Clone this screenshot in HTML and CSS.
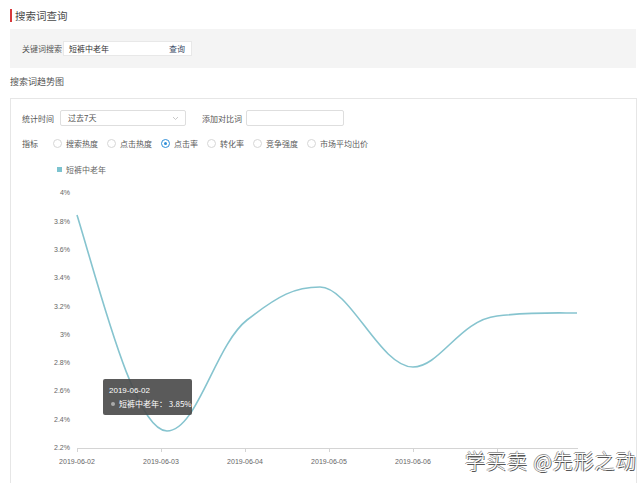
FILE: index.html
```html
<!DOCTYPE html>
<html lang="zh-CN">
<head>
<meta charset="utf-8">
<title>搜索词查询</title>
<link rel="stylesheet" href="styles.css">
</head>
<body>
<div class="header"><span class="title">搜索词查询</span></div>
<div class="search">
  <span class="search-label">关键词搜索</span>
  <div class="search-box"><span class="kw">短裤中老年</span><span class="query">查询</span></div>
</div>
<div class="section-title">搜索词趋势图</div>
<div class="chart-panel">
  <div class="controls">
    <div class="row">
      <span class="lbl">统计时间</span>
      <div class="select">过去7天<svg class="chev" width="7" height="5" viewBox="0 0 7 5"><path d="M1 1 L3.5 3.5 L6 1" fill="none" stroke="#bbb" stroke-width="0.8"/></svg></div>
      <span class="lbl2">添加对比词</span>
      <div class="cmp-input"></div>
    </div>
    <div class="row row2">
      <span class="lbl-short">指标</span>
      <label class="radio"><i class="dot"></i>搜索热度</label>
      <label class="radio"><i class="dot"></i>点击热度</label>
      <label class="radio"><i class="dot on"></i>点击率</label>
      <label class="radio"><i class="dot"></i>转化率</label>
      <label class="radio"><i class="dot"></i>竞争强度</label>
      <label class="radio"><i class="dot"></i>市场平均出价</label>
    </div>
    <div class="legend"><i class="sq"></i>短裤中老年</div>
  </div>
  <svg class="chart" width="624" height="308" viewBox="11 175 624 308">
    <g class="ylab">
      <text x="70" y="193">4%</text>
      <text x="70" y="222">3.8%</text>
      <text x="70" y="250">3.6%</text>
      <text x="70" y="278">3.4%</text>
      <text x="70" y="307">3.2%</text>
      <text x="70" y="335">3%</text>
      <text x="70" y="363">2.8%</text>
      <text x="70" y="391">2.6%</text>
      <text x="70" y="420">2.4%</text>
      <text x="70" y="448">2.2%</text>
    </g>
    <line x1="77" y1="448.5" x2="578" y2="448.5" stroke="#d4d4d4" stroke-width="1"/>
    <g stroke="#d4d4d4" stroke-width="1">
      <line x1="77.5" y1="448" x2="77.5" y2="452"/>
      <line x1="161.5" y1="448" x2="161.5" y2="452"/>
      <line x1="245.5" y1="448" x2="245.5" y2="452"/>
      <line x1="329.5" y1="448" x2="329.5" y2="452"/>
      <line x1="413.5" y1="448" x2="413.5" y2="452"/>
      <line x1="497.5" y1="448" x2="497.5" y2="452"/>
    </g>
    <g class="xlab">
      <text x="77" y="464">2019-06-02</text>
      <text x="161" y="464">2019-06-03</text>
      <text x="245" y="464">2019-06-04</text>
      <text x="329" y="464">2019-06-05</text>
      <text x="413" y="464">2019-06-06</text>
    </g>
    <path d="M77,215 C100,290 135,431 167,431 C197,431 215,345 247,320 C279,295 295,287 320,287 C350,287 380,367 413,367 C440,367 460,320 497,316 C530,312 555,313 577,313" fill="none" stroke="#86c4cf" stroke-width="1.6"/>
  </svg>
  <div class="tooltip">
    <div class="tt-date">2019-06-02</div>
    <div class="tt-row"><i class="tt-dot"></i>短裤中老年： 3.85%</div>
  </div>
</div>
<div class="watermark">学买卖 @先形之动</div>
</body>
</html>
```

FILE: styles.css
```css
* { box-sizing: border-box; }
body {
  margin: 0;
  background: #fff;
  font-family: "Noto Sans CJK SC", "Noto Sans", sans-serif;
  font-size: 8px;
  color: #555;
  overflow: hidden;
  height: 483px;
}
.header {
  height: 29px;
  padding: 9px 0 0 10px;
}
.title {
  display: block;
  border-left: 2px solid #d8393b;
  padding-left: 3px;
  line-height: 13px;
  font-size: 10.5px;
  color: #4a4a4a;
}
.search {
  margin-left: 10px;
  width: 626px;
  height: 39px;
  background: #f4f4f4;
  display: flex;
  align-items: center;
  padding-left: 12px;
}
.search-label { width: 41px; color: #555; }
.search-box {
  width: 129px;
  height: 15px;
  background: #fff;
  border: 1px solid #e8e8e8;
  display: flex;
  align-items: center;
  justify-content: space-between;
  padding: 0 6px 0 5px;
  color: #333;
}
.query { color: #3a4a66; }
.section-title {
  height: 30px;
  padding: 8px 0 0 10px;
  font-size: 9px;
  line-height: 12px;
  color: #555;
}
.chart-panel {
  position: relative;
  margin-left: 10px;
  width: 627px;
  height: 385px;
  border: 1px solid #e6e6e6;
  border-bottom: none;
}
.controls { padding: 11px 0 0 11px; }
.row {
  display: flex;
  align-items: center;
  height: 16px;
}
.lbl { width: 38px; }
.select {
  position: relative;
  width: 126px;
  height: 16px;
  border: 1px solid #dedede;
  border-radius: 2px;
  padding-left: 7px;
  line-height: 14px;
  color: #555;
}
.chev { position: absolute; right: 6px; top: 5px; }
.lbl2 { margin-left: 16px; width: 44px; }
.cmp-input {
  width: 98px;
  height: 16px;
  border: 1px solid #dedede;
  border-radius: 2px;
}
.row2 { margin-top: 9px; }
.lbl-short { width: 31px; }
.radio {
  display: flex;
  align-items: center;
  margin-right: 9px;
  color: #5a5a5a;
}
.dot {
  width: 9px;
  height: 9px;
  border: 1px solid #d6d6d6;
  border-radius: 50%;
  margin-right: 4px;
  position: relative;
}
.dot.on { border-color: #2f8ed8; }
.dot.on::after {
  content: "";
  position: absolute;
  left: 2px;
  top: 2px;
  width: 3px;
  height: 3px;
  border-radius: 50%;
  background: #2f8ed8;
}
.legend {
  margin-top: 12px;
  height: 12px;
  padding-left: 35px;
  display: flex;
  align-items: center;
  color: #666;
}
.sq {
  width: 5px;
  height: 5px;
  background: #7cc3cf;
  margin-right: 4px;
}
.chart { display: block; }
.ylab text {
  font-family: "Liberation Sans", sans-serif;
  font-size: 7px;
  fill: #666;
  text-anchor: end;
  dominant-baseline: middle;
}
.xlab text {
  font-family: "Liberation Sans", sans-serif;
  font-size: 7px;
  fill: #666;
  text-anchor: middle;
}
.tooltip {
  position: absolute;
  left: 92px;
  top: 280px;
  width: 89px;
  height: 36px;
  background: rgba(72, 72, 72, 0.9);
  border-radius: 2px;
  color: #fff;
  padding: 5px 0 0 6px;
  font-size: 8px;
  line-height: 13px;
}
.tt-date { font-family: "Liberation Sans", sans-serif; }
.tt-row { display: flex; align-items: center; }
.tt-dot {
  width: 4px;
  height: 4px;
  border-radius: 50%;
  background: #aaa;
  margin: 0 4px 0 2px;
}
.watermark {
  position: absolute;
  left: 465px;
  top: 447px;
  font-size: 20px;
  line-height: 28px;
  font-weight: 300;
  color: #fff;
  letter-spacing: 1px;
  text-shadow: 1px 1px 0 #555, -1px 0 0 #999, 0 -1px 0 #999;
  white-space: nowrap;
}
```
